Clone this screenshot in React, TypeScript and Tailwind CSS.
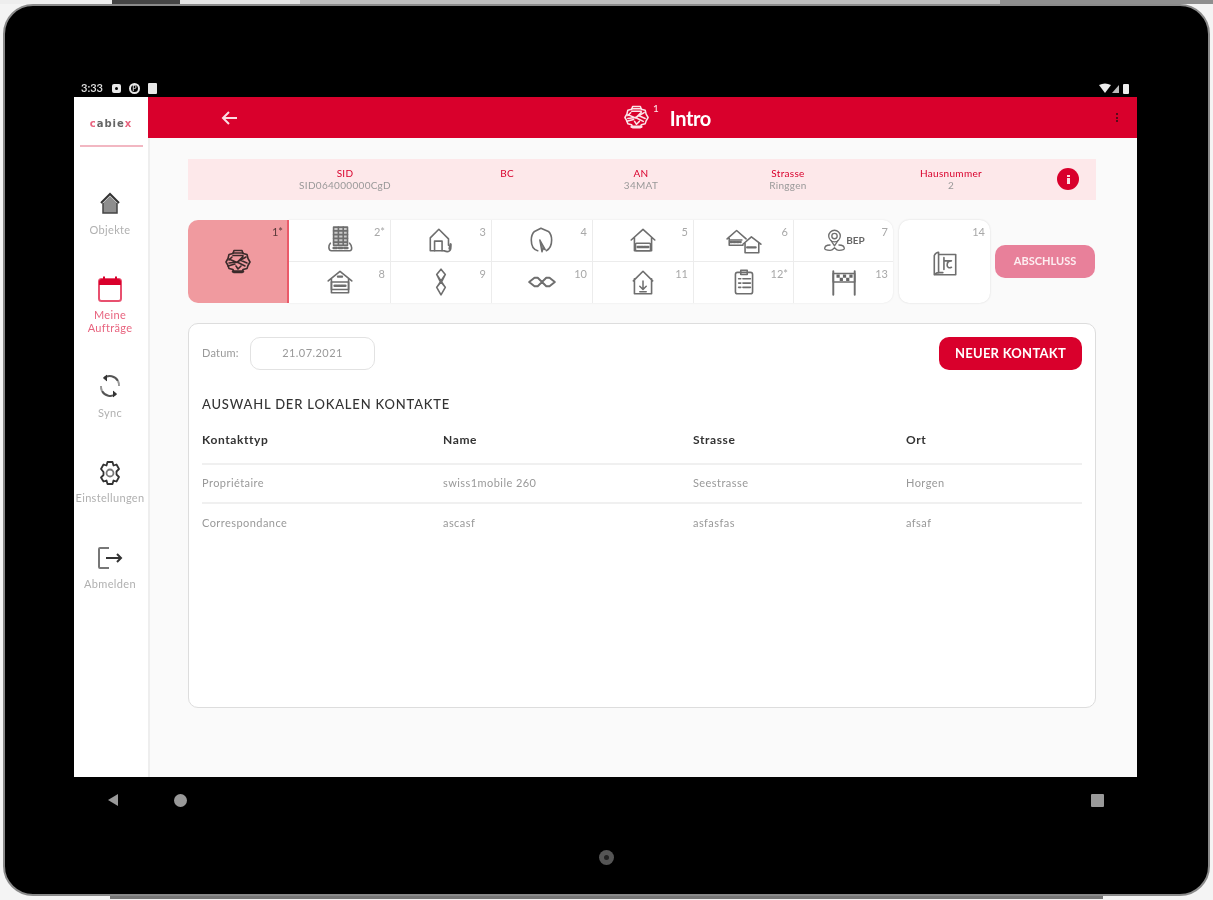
import React from "react";

const S = ({ size = 28, color = "#6e6e6e", sw = 1.5, children, vb = "0 0 28 28" }: { size?: number; color?: string; sw?: number; children: React.ReactNode; vb?: string }) => (
  <svg width={size} height={size} viewBox={vb} fill="none" stroke={color} strokeWidth={sw} strokeLinecap="round" strokeLinejoin="round">
    {children}
  </svg>
);

const Spool = ({ color = "#333", size = 28 }: { color?: string; size?: number }) => (
  <S color={color} size={size} sw={1.6}>
    <path d="M10 2.500h8l1 3 4 1 1 4 2 3.500-2 3.500-1 3-4 1-1 3h-8l-1-3-4-1-1-3-2-3.500 2-3.500 1-4 4-1z" />
    <path d="M9 5h10M9 7.500h10M5 11l8 3.500 6-6M5 15l8-1 8 4M4 18l7-2M13 14l9-5M16 12l7 3M8 9l-3 3M12 18l2 3 3-3" />
    <path d="M9 23.500h10" strokeWidth={2.6} strokeDasharray="2 1" />
  </S>
);

const BepBox = ({ y = 17 }: { y?: number }) => (
  <>
    <rect x="7" y={y} width="14" height="7" rx="1" />
    <path d={`M9 ${y + 3.5}h10`} strokeWidth={2.2} strokeDasharray="2 1" />
  </>
);

const icons: Record<string, React.ReactNode> = {
  "2": (
    <S size={30}>
      <rect x="8" y="2" width="13" height="17" fill="#c9c9c9" />
      <path d="M8 5.500h13M8 9h13M8 12.500h13M8 16h13M12.500 2v17M17 2v17" />
      <path d="M5 17c-2 2-2 7 1 7h17c3 0 2-5 0-7" />
      <path d="M8 21.500h3M13 21.500h3M18 21.500h3" strokeWidth={2.2} />
    </S>
  ),
  "3": (
    <S size={30}>
      <path d="M4 24V12l8-8 9 9v6M4 24h13" />
      <path d="M8 24v-9h7v9" />
      <path d="M17 24c4 2 7 0 6-5" />
      <path d="M23 18l-1 4" strokeWidth={2.2} />
    </S>
  ),
  "4": (
    <S size={30}>
      <path d="M10 24c-4-1-6-5-6-10 0-3 1-6 3-8l6-3 7 3c2 2 3 5 3 8 0 5-1 8-5 10" />
      <path d="M12 14l5 9-2-1-1 3z" strokeWidth={1.4} fill="#888" />
    </S>
  ),
  "5": (
    <S size={30}>
      <path d="M3 14L14 4l11 10M6 12v12h16V12" />
      <BepBox />
    </S>
  ),
  "6": (
    <S size={38} vb="0 0 36 28">
      <path d="M2 13L11 5l9 8M4 11v8h13M5 14h11" />
      <path d="M5 16h10" strokeWidth={2} strokeDasharray="2 1" />
      <path d="M17 18l8-7 9 7M19 17v9h13v-9" />
      <path d="M21 21h9" strokeWidth={2.2} strokeDasharray="2 1" />
    </S>
  ),
  "7": (
    <div className="flex items-center">
      <S size={25}>
        <circle cx="14" cy="9" r="6.500" />
        <circle cx="14" cy="9" r="3" />
        <path d="M10 14l4 6 4-6M9 19c-4 0-6 2-6 4 0 2 3 2 6 2 3 0 4-2 5-3 1 1 2 3 5 3 3 0 6 0 6-2 0-2-2-4-6-4" />
      </S>
      <span className="-ml-[1px] text-[10px] font-bold leading-none text-[#666]">BEP</span>
    </div>
  ),
  "8": (
    <S size={30}>
      <path d="M3 13L14 4l11 9M6 11v13h16V11" />
      <path d="M12 9h4" strokeWidth={2} />
      <rect x="6" y="14" width="16" height="7" />
      <path d="M9 17.500h10" strokeWidth={2.4} strokeDasharray="2 1" />
    </S>
  ),
  "9": (
    <S size={30}>
      <path d="M14 2l4 5-3 6-1 1-1-1-3-6zM14 14l4 5-4 7-4-7zM10 7l8 12M18 7L10 19" />
    </S>
  ),
  "10": (
    <S size={30}>
      <path d="M2 14l5-4h3l4 4 4 4h3l5-4-5-4h-3l-4 4-4 4H7z" strokeWidth={1.8} />
    </S>
  ),
  "11": (
    <S size={30}>
      <path d="M5 13L14 4l9 9M6 11v14h16V11" />
      <path d="M14 13v7M11 18l3 3 3-3M11 23h6" strokeWidth={1.4} />
    </S>
  ),
  "12": (
    <S size={30}>
      <rect x="6" y="5" width="16" height="20" rx="2" />
      <path d="M11 3h6v4h-6z" />
      <path d="M9 11h2M13 11h7M9 15h2M13 15h7M9 19h2M13 19h7" />
    </S>
  ),
  "13": (
    <S size={30}>
      <path d="M4 4v22M24 4v22" strokeWidth={1.8} />
      <path d="M4 6h20v8H4z" />
      <path d="M7 7h3v3H7zM13 7h3v3h-3zM19 7h3v3h-3zM10 10h3v3h-3zM16 10h3v3h-3z" fill="#666" stroke="none" />
    </S>
  ),
  "14": (
    <S size={30}>
      <path d="M8 4v19c-2 0-3 1-4 2V7c1-2 2-3 4-3zM8 6h16v19H4" />
      <path d="M13 9v11M13 12h7M20 12c-3 0-4 2-4 4s2 3 4 2" />
      <path d="M8 23h4" />
    </S>
  ),
};

const Tile = ({ n, label, right, bottom }: { n: string; label: string; right?: boolean; bottom?: boolean }) => (
  <div className={`relative flex items-center justify-center border-[#ececec] ${right ? "" : "border-r"} ${bottom ? "" : "border-b"}`}>
    {icons[n]}
    <span className="absolute right-[5px] top-[6px] text-[11px] leading-none text-[#a8a8a8]">{label}</span>
  </div>
);

const Info = ({ label, value, cls }: { label: string; value: string; cls: string }) => (
  <div className={`w-[100px] text-center text-[10px] leading-[12px] tracking-[0.03em] ${cls}`}>
    <div className="text-[#d9002c]">{label}</div>
    <div className="whitespace-nowrap text-[#999]">{value || "\u00a0"}</div>
  </div>
);

const NavItem = ({ icon, label, active }: { icon: React.ReactNode; label: string; active?: boolean }) => (
  <div className={`flex flex-col items-center text-center text-[11px] leading-[13px] tracking-[0.03em] ${active ? "text-[#e8647f]" : "text-[#b0b0b0]"}`}>
    {icon}
    {label.split("\n").map((l) => (
      <span key={l}>{l}</span>
    ))}
  </div>
);

const rows = [
  ["Propriétaire", "swiss1mobile 260", "Seestrasse", "Horgen"],
  ["Correspondance", "ascasf", "asfasfas", "afsaf"],
];

const cols = "grid grid-cols-[241px_250px_213px_1fr]";

export default function App() {
  return (
    <div className="flex h-[900px] w-[1213px] flex-col overflow-hidden bg-[#f4f4f4] font-['Lato','Liberation_Sans',sans-serif]">
      <div className="flex h-[4px] shrink-0">
        <div className="w-[112px] bg-[#eeeeee]" />
        <div className="w-[68px] bg-[#444444]" />
        <div className="w-[120px] bg-[#e5e5e5]" />
        <div className="w-[700px] bg-[#bdbdbd]" />
        <div className="flex-1 bg-[#8f8f8f]" />
      </div>
      <div className="mx-[3px] flex h-[892px] shrink-0 flex-col rounded-[30px] border-[2px] border-[#8a8a8a] bg-black pl-[69px] pr-[71px]">
        {/* status bar */}
        <div className="mt-[74px] flex h-[17px] shrink-0 items-center justify-between pl-[7px] pr-[5px] blur-[0.5px]">
          <div className="flex items-center gap-[8px] text-[11px] font-semibold text-[#e0e0e0]">
            <span className="w-[23px]">3:33</span>
            <span className="flex h-[9px] w-[9px] items-center justify-center rounded-[2px] bg-[#e8e8e8]">
              <span className="h-[3px] w-[3px] rounded-full bg-black" />
            </span>
            <span className="flex h-[11px] w-[11px] items-center justify-center rounded-full border-[2px] border-[#e8e8e8] text-[7px] leading-none">P</span>
            <span className="h-[11px] w-[9px] rounded-[1px] bg-[#e8e8e8]" />
          </div>
          <svg width="34" height="12" viewBox="0 0 34 12" fill="#eee">
            <path d="M1 2c4-2 8-2 12 0L7 10z" />
            <path d="M14 10l7-8v8z" fill="#bbb" />
            <rect x="25" y="1" width="6" height="10" rx="1" />
          </svg>
        </div>
        {/* screen */}
        <div className="flex h-[680px] shrink-0 blur-[0.7px]">
          <aside className="flex w-[74px] shrink-0 flex-col items-center bg-white pr-[2px]">
            <div className="ml-[2px] mt-[20px] font-['DejaVu_Sans',sans-serif] text-[10px] font-bold leading-[14px] tracking-[0.1em] text-[#666]">
              <span className="text-[#e8647f]">c</span>abie<span className="text-[#e8647f]">x</span>
            </div>
            <div className="ml-[2px] mt-[14px] h-[2px] w-[63px] bg-[#f2b7c2]" />
            <div className="mt-[44px] flex flex-col items-center">
              <NavItem
                label="Objekte"
                icon={
                  <svg width="24" height="26" viewBox="0 0 24 26" className="mb-[6px]">
                    <path d="M3 12L12 3l9 9" fill="none" stroke="#333" strokeWidth="2" />
                    <path d="M5 12l7-7 7 7v10H5z" fill="#8e8e8e" />
                    <path d="M5 12v10h14V12" fill="none" stroke="#444" strokeWidth="1.500" />
                  </svg>
                }
              />
              <div className="mt-[39px]">
                <NavItem
                  active
                  label={"Meine\nAufträge"}
                  icon={
                    <svg width="28" height="28" viewBox="0 0 28 28" className="mb-[5px]" fill="none">
                      <rect x="3" y="4" width="22" height="22" rx="2.500" stroke="#e8506f" strokeWidth="2" />
                      <path d="M3 7a3 3 0 013-3h16a3 3 0 013 3v3H3z" fill="#d9002c" />
                      <path d="M8 1.500v3M20 1.500v3" stroke="#d9002c" strokeWidth="2" />
                    </svg>
                  }
                />
              </div>
              <div className="mt-[39px]">
                <NavItem
                  label="Sync"
                  icon={
                    <svg width="26" height="26" viewBox="0 0 26 26" className="mb-[7px]" fill="none" stroke="#444" strokeWidth="2">
                      <path d="M21 8a9.500 9.500 0 00-14-3" stroke="#555" />
                      <path d="M5 18a9.500 9.500 0 0014 3" stroke="#555" />
                      <path d="M22 13a9 9 0 00-1-5M4 13a9 9 0 001 5" stroke="#999" />
                      <path d="M10 2L6.500 5 10 8M16 24l3.500-3-3.500-3" fill="#333" stroke="#333" strokeWidth="1" />
                    </svg>
                  }
                />
              </div>
              <div className="mt-[41px]">
                <NavItem
                  label="Einstellungen"
                  icon={
                    <svg width="26" height="26" viewBox="0 0 26 26" className="mb-[5px]" fill="none" stroke="#333" strokeWidth="1.800" strokeLinejoin="round">
                      <path d="M10.500 2h5l1 3.500 3-1 2.500 4.500-2.500 2.500v3l2.500 2.500-2.500 4.500-3-1-1 3.500h-5l-1-3.500-3 1L4 17.500 6.500 15v-3L4 9l2.500-4.500 3 1z" />
                      <circle cx="13" cy="13" r="3.500" stroke="#777" />
                    </svg>
                  }
                />
              </div>
              <div className="mt-[41px]">
                <NavItem
                  label="Abmelden"
                  icon={
                    <svg width="28" height="26" viewBox="0 0 28 26" className="mb-[6px]" fill="none">
                      <path d="M13 3H4a1 1 0 00-1 1v18a1 1 0 001 1h9" stroke="#777" strokeWidth="2" />
                      <path d="M10 13h14" stroke="#333" strokeWidth="2" />
                      <path d="M21 9l4 4-4 4" stroke="#333" strokeWidth="2" />
                    </svg>
                  }
                />
              </div>
            </div>
          </aside>
          <div className="flex min-w-0 flex-1 flex-col bg-[#fafafa]">
            <header className="flex h-[41px] shrink-0 items-center bg-[#d9002c] text-white">
              <svg width="18" height="16" viewBox="0 0 18 16" fill="none" stroke="#fbdde3" strokeWidth="2" className="ml-[73px]">
                <path d="M16 8H2M8 2L2 8l6 6" />
              </svg>
              <div className="ml-[384px] flex items-center">
                <Spool color="#fbe3e8" size={27} />
                <span className="relative -top-[10px] ml-[3px] text-[10px] leading-none text-[#fde8ec]">1</span>
                <span className="ml-[11px] text-[20px] font-bold leading-none tracking-[-0.02em]">Intro</span>
              </div>
              <div className="ml-auto mr-[19px] flex flex-col gap-[1.500px]">
                <span className="h-[2px] w-[2px] bg-[#5a0a1a]" />
                <span className="h-[2px] w-[2px] bg-[#5a0a1a]" />
                <span className="h-[2px] w-[2px] bg-[#5a0a1a]" />
              </div>
            </header>
            <main className="flex-1 border-l-[2px] border-[#eeeeee] pl-[38px] pr-[41px] pt-[21px]">
              {/* info bar */}
              <div className="flex h-[41px] items-start bg-[#fde8ea] pt-[8px]">
                <Info label="SID" value="SID064000000CgD" cls="ml-[107px]" />
                <Info label="BC" value="" cls="ml-[62px]" />
                <Info label="AN" value="34MAT" cls="ml-[34px]" />
                <Info label="Strasse" value="Ringgen" cls="ml-[47px]" />
                <Info label="Hausnummer" value="2" cls="ml-[63px]" />
                <div className="ml-[56px] mt-[1px] flex h-[22px] w-[22px] flex-col items-center justify-center gap-[1px] rounded-full bg-[#d9002c]">
                  <span className="h-[2px] w-[3px] bg-[#fbdde3]" />
                  <span className="h-[6px] w-[3px] bg-[#fbdde3]" />
                </div>
              </div>
              {/* tiles */}
              <div className="mt-[20px] flex h-[83px] items-stretch">
                <div className="relative flex w-[101px] shrink-0 items-center justify-center rounded-l-[10px] border-r-[2px] border-[#ea5a69] bg-[#f09a9f]">
                  <Spool color="#3a2a2a" />
                  <span className="absolute right-[4px] top-[6px] text-[11px] leading-none text-[#5a3a3a]">1*</span>
                </div>
                <div className="grid w-[604px] shrink-0 grid-cols-[102px_101px_101px_101px_100px_99px] grid-rows-2 rounded-r-[10px] bg-white shadow-[0_0_2px_rgba(0,0,0,0.1)]">
                  <Tile n="2" label="2*" />
                  <Tile n="3" label="3" />
                  <Tile n="4" label="4" />
                  <Tile n="5" label="5" />
                  <Tile n="6" label="6" />
                  <Tile n="7" label="7" right />
                  <Tile n="8" label="8" bottom />
                  <Tile n="9" label="9" bottom />
                  <Tile n="10" label="10" bottom />
                  <Tile n="11" label="11" bottom />
                  <Tile n="12" label="12*" bottom />
                  <Tile n="13" label="13" bottom right />
                </div>
                <div className="relative ml-[6px] flex w-[91px] shrink-0 items-center justify-center rounded-[10px] bg-white pt-[2px] shadow-[0_0_2px_rgba(0,0,0,0.15)]">
                  {icons["14"]}
                  <span className="absolute right-[5px] top-[6px] text-[11px] leading-none text-[#a8a8a8]">14</span>
                </div>
                <div className="ml-[5px] flex h-[33px] w-[100px] shrink-0 items-center justify-center self-center rounded-[10px] bg-[#e8809a] text-[11px] font-bold text-[#fdeef1]">
                  ABSCHLUSS
                </div>
              </div>
              {/* card */}
              <div className="mt-[20px] h-[385px] rounded-[10px] border border-[#dddddd] bg-white px-[13px] pt-[13px]">
                <div className="flex items-center">
                  <span className="w-[48px] text-[11px] tracking-[0.02em] text-[#999]">Datum:</span>
                  <div className="flex h-[33px] w-[125px] items-center justify-center rounded-[10px] border border-[#e2e2e2] text-[11px] tracking-[0.04em] text-[#999]">
                    21.07.2021
                  </div>
                  <div className="ml-auto flex h-[33px] w-[143px] items-center justify-center rounded-[10px] bg-[#d9002c] text-[13px] font-bold tracking-[0.02em] text-white">
                    NEUER KONTAKT
                  </div>
                </div>
                <h2 className="mt-[25px] text-[13px] font-medium leading-[18px] tracking-[0.063em] text-[#333]">AUSWAHL DER LOKALEN KONTAKTE</h2>
                <div className={`${cols} mt-[17px] h-[35px] border-b-[2px] border-[#f0f0f0] pt-[3px] text-[12px] font-bold leading-[14px] tracking-[0.05em] text-[#333]`}>
                  <span>Kontakttyp</span>
                  <span>Name</span>
                  <span>Strasse</span>
                  <span>Ort</span>
                </div>
                {rows.map((r, i) => (
                  <div key={r[0]} className={`${cols} h-[39px] items-center text-[11px] tracking-[0.04em] text-[#999] ${i === 0 ? "border-b-[2px] border-[#f0f0f0]" : ""}`}>
                    {r.map((c) => (
                      <span key={c}>{c}</span>
                    ))}
                  </div>
                ))}
              </div>
            </main>
          </div>
        </div>
        {/* nav bar */}
        <div className="flex h-[46px] shrink-0 items-center pl-[32px] pr-[33px] blur-[0.5px]">
          <svg width="14" height="14" viewBox="0 0 14 14" fill="#999">
            <path d="M12 1v12L2 7z" />
          </svg>
          <span className="ml-[54px] h-[13px] w-[13px] rounded-full bg-[#999]" />
          <span className="ml-auto h-[13px] w-[13px] rounded-[1px] bg-[#999]" />
        </div>
        <div className="ml-[525px] mt-[27px] flex h-[15px] w-[15px] items-center justify-center rounded-full bg-[#555]">
          <span className="h-[5px] w-[5px] rounded-full bg-[#222]" />
        </div>
      </div>
      <div className="mx-[110px] h-[3px] shrink-0 bg-[#777]" />
    </div>
  );
}
